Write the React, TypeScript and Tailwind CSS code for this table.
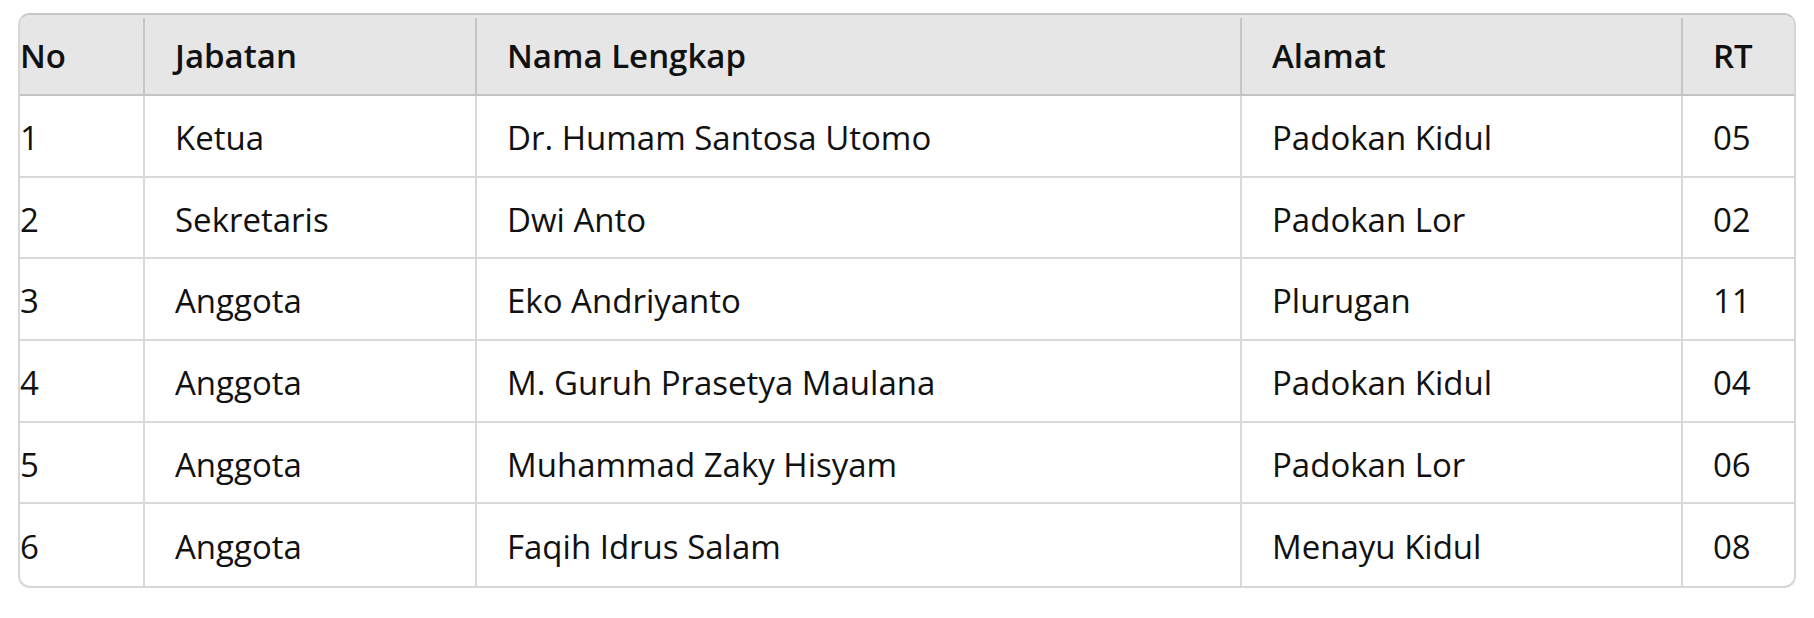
const rows = [
  { no: '1', jabatan: 'Ketua', nama: 'Dr. Humam Santosa Utomo', alamat: 'Padokan Kidul', rt: '05' },
  { no: '2', jabatan: 'Sekretaris', nama: 'Dwi Anto', alamat: 'Padokan Lor', rt: '02' },
  { no: '3', jabatan: 'Anggota', nama: 'Eko Andriyanto', alamat: 'Plurugan', rt: '11' },
  { no: '4', jabatan: 'Anggota', nama: 'M. Guruh Prasetya Maulana', alamat: 'Padokan Kidul', rt: '04' },
  { no: '5', jabatan: 'Anggota', nama: 'Muhammad Zaky Hisyam', alamat: 'Padokan Lor', rt: '06' },
  { no: '6', jabatan: 'Anggota', nama: 'Faqih Idrus Salam', alamat: 'Menayu Kidul', rt: '08' },
];

const cols = 'grid grid-cols-[125px_332px_765px_441px_1fr]';

export default function App() {
  return (
    <main
      className="min-h-screen bg-white px-[18px] pt-[13px] text-[#111]"
      style={{ fontFamily: '"Open Sans", "Noto Sans", sans-serif' }}
    >
      <div className="overflow-hidden rounded-xl border-2 border-[#d6d6d6] border-t-[#c6c6c6]">
        <div className={`${cols} h-[81px] border-b-2 border-[#c3c3c3] bg-[#e6e6e6] pt-[3px] text-[33px] font-semibold`}>
          <div className="flex items-center border-r-2 border-[#c6c6c6]">No</div>
          <div className="flex items-center border-r-2 border-[#c6c6c6] pl-[30px]">Jabatan</div>
          <div className="flex items-center border-r-2 border-[#c6c6c6] pl-[30px]">Nama Lengkap</div>
          <div className="flex items-center border-r-2 border-[#c6c6c6] pl-[30px]">Alamat</div>
          <div className="flex items-center pl-[30px]">RT</div>
        </div>
        {rows.map((row, i) => (
          <div
            key={row.no}
            className={`${cols} h-[81.67px] text-[33px] ${i < rows.length - 1 ? 'border-b-2 border-[#d9d9d9]' : ''}`}
          >
            <div className="flex items-center border-r-2 border-[#d9d9d9] pt-[4px]">{row.no}</div>
            <div className="flex items-center border-r-2 border-[#d9d9d9] pl-[30px] pt-[4px]">{row.jabatan}</div>
            <div className="flex items-center border-r-2 border-[#d9d9d9] pl-[30px] pt-[4px]">{row.nama}</div>
            <div className="flex items-center border-r-2 border-[#d9d9d9] pl-[30px] pt-[4px]">{row.alamat}</div>
            <div className="flex items-center pl-[30px] pt-[4px]">{row.rt}</div>
          </div>
        ))}
      </div>
    </main>
  );
}
